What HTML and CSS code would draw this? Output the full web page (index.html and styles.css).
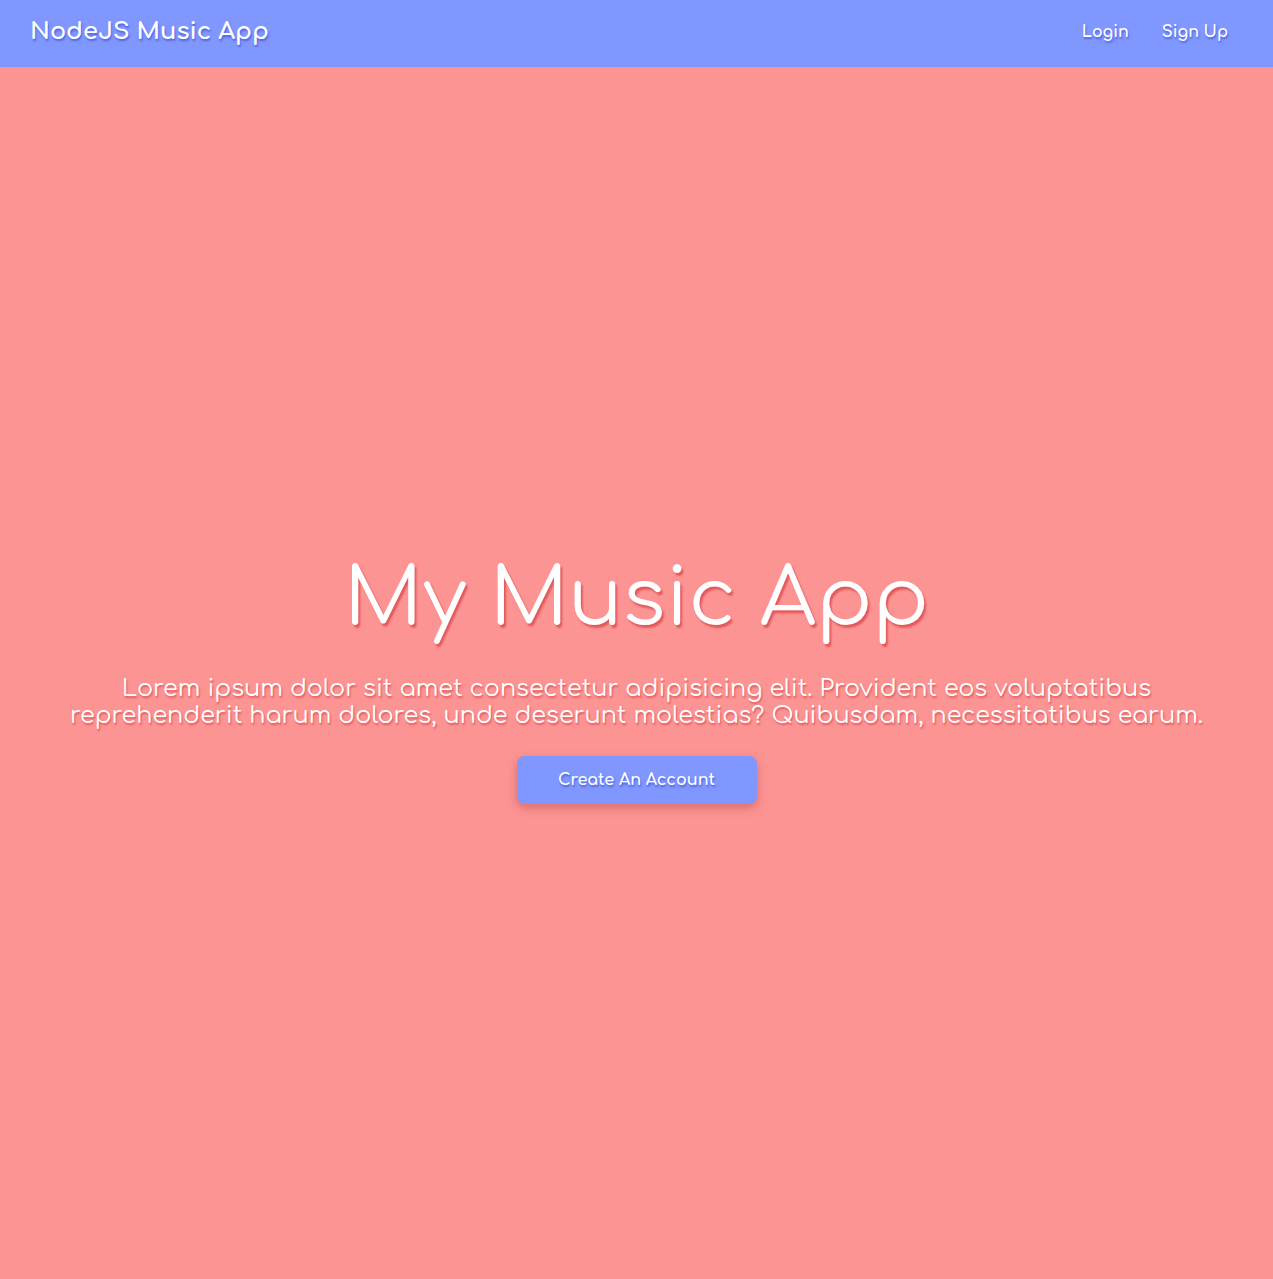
FILE: index.html
```html
<!DOCTYPE html>
<html lang="en">
<head>
<meta charset="utf-8">
<title>NodeJS Music App</title>
<link rel="stylesheet" href="styles.css">
</head>
<body>
<nav class="navbar">
  <a class="brand" href="#">NodeJS Music App</a>
  <ul class="nav-links">
    <li><a href="#">Login</a></li>
    <li><a href="#">Sign Up</a></li>
  </ul>
</nav>
<main class="hero">
  <h1 class="hero-title">My Music App</h1>
  <p class="hero-text">Lorem ipsum dolor sit amet consectetur adipisicing elit. Provident eos voluptatibus reprehenderit harum dolores, unde deserunt molestias? Quibusdam, necessitatibus earum.</p>
  <a class="btn" href="#">Create An Account</a>
</main>
</body>
</html>
```

FILE: styles.css
```css
* { box-sizing: border-box; }
html, body { margin: 0; padding: 0; }
body {
  font-family: "Comfortaa", "Open Sans", "Liberation Sans", sans-serif;
  background: #fc9494;
  color: #fff;
  min-height: 100vh;
}
a { color: #fff; text-decoration: none; }
.navbar {
  height: 67px;
  background: #7f97ff;
  display: flex;
  align-items: center;
  justify-content: space-between;
  padding: 0 45px 4px 30px;
}
.brand {
  font-size: 24px;
  font-weight: 700;
  text-shadow: 1px 2px 2px #4f62e6;
}
.nav-links {
  list-style: none;
  display: flex;
  gap: 33px;
  margin: 0;
  padding: 0;
}
.nav-links a {
  font-size: 15.8px;
  font-weight: 700;
  text-shadow: 1px 2px 2px #4f62e6;
}
.hero {
  min-height: calc(100vh - 67px);
  display: flex;
  flex-direction: column;
  align-items: center;
  justify-content: center;
  text-align: center;
  padding: 9px 40px 0;
}
.hero-title {
  margin: 0;
  font-size: 80px;
  font-weight: 400;
  line-height: 1.2;
  text-shadow: 2px 3px 2px #e5595b;
}
.hero-text {
  margin: 27px 0 27px;
  font-size: 23.9px;
  line-height: 27px;
  max-width: 1180px;
  text-shadow: 1px 2px 2px #e5595b;
}
.btn {
  display: inline-flex;
  align-items: center;
  justify-content: center;
  width: 240px;
  height: 48px;
  border-radius: 8px;
  background: #7f97ff;
  font-size: 16px;
  font-weight: 700;
  text-shadow: 1px 2px 2px #4f62e6;
  box-shadow: 0 4px 10px rgba(180, 60, 60, 0.45);
}
```
